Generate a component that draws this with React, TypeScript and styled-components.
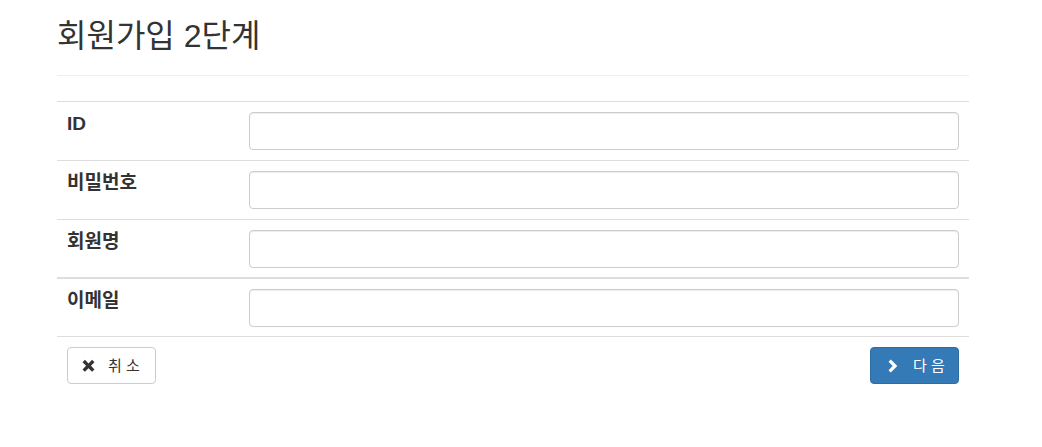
import React from "react";
import styled, { createGlobalStyle } from "styled-components";

const Global = createGlobalStyle`
  html, body { margin: 0; padding: 0; background: #fff; }
  body {
    font-family: "Liberation Sans", "Noto Sans CJK KR", Arial, sans-serif;
    font-size: 14px;
    line-height: 1.42857;
    color: #333;
  }
  * { box-sizing: border-box; }
`;

const Page = styled.div`
  width: 912px;
  margin-left: 57px;
  padding-top: 19px;
`;

const Header = styled.div`
  border-bottom: 1px solid #eee;
  padding-bottom: 21px;
  margin-bottom: 25px;
`;

const Title = styled.h2`
  margin: 0;
  font-size: 32px;
  font-weight: 400;
  line-height: 35px;
  color: #333;
`;

const Form = styled.div`
  display: flex;
  flex-direction: column;
`;

const Row = styled.div<{ $thick?: boolean; $tight?: boolean }>`
  display: grid;
  grid-template-columns: 182px 1fr;
  border-top: ${(p) => (p.$thick ? "2px" : "1px")} solid #ddd;
  padding: 10px 0 ${(p) => (p.$tight ? "9px" : "10px")};
`;

const Label = styled.label`
  padding: 0 10px;
  font-size: 19px;
  font-weight: 700;
  line-height: 23px;
  color: #333;
`;

const Field = styled.div`
  padding: 0 10px;
`;

const Input = styled.input`
  display: block;
  width: 100%;
  height: 38px;
  padding: 6px 12px;
  font-size: 14px;
  border: 1px solid #ccc;
  border-radius: 4px;
  background: #fff;
  box-shadow: inset 0 1px 1px rgba(0, 0, 0, 0.075);
  outline: none;
`;

const Footer = styled.div`
  display: flex;
  justify-content: space-between;
  border-top: 1px solid #ddd;
  padding: 10px 10px;
`;

const Button = styled.button<{ $primary?: boolean }>`
  display: inline-flex;
  align-items: center;
  justify-content: flex-start;
  gap: ${(p) => (p.$primary ? "14px" : "12px")};
  width: 89px;
  height: 37px;
  padding: 0 0 0 ${(p) => (p.$primary ? "17px" : "13px")};
  font-family: "Liberation Sans", "Noto Sans CJK KR", Arial, sans-serif;
  font-size: 15px;
  line-height: 20px;
  border-radius: 4px;
  cursor: pointer;
  color: ${(p) => (p.$primary ? "#fff" : "#333")};
  background: ${(p) => (p.$primary ? "#337ab7" : "#fff")};
  border: 1px solid ${(p) => (p.$primary ? "#2e6da4" : "#ccc")};
`;

const Icon = styled.svg<{ $w: number }>`
  width: ${(p) => p.$w}px;
  height: 14px;
  flex: none;
`;

const RemoveIcon = () => (
  <Icon $w={15} viewBox="0 0 15 14">
    <path d="M1.5 3.2 L3.9 0.8 L7.5 4.4 L11.1 0.8 L13.5 3.2 L9.9 6.8 L13.5 10.4 L11.1 12.8 L7.5 9.2 L3.9 12.8 L1.5 10.4 L5.1 6.8 Z" fill="#333" />
  </Icon>
);

const ChevronIcon = () => (
  <Icon $w={11} viewBox="0 0 11 14">
    <path d="M0.5 2.8 L2.8 0.5 L9.3 7 L2.8 13.5 L0.5 11.2 L4.7 7 Z" fill="#fff" />
  </Icon>
);

const fields = ["ID", "비밀번호", "회원명", "이메일"];

export default function App() {
  return (
    <>
      <Global />
      <Page>
        <Header>
          <Title>회원가입 2단계</Title>
        </Header>
        <Form>
          {fields.map((f, i) => (
            <Row key={f} $thick={i === 3} $tight={i >= 2}>
              <Label>{f}</Label>
              <Field>
                <Input type={i === 1 ? "password" : "text"} />
              </Field>
            </Row>
          ))}
          <Footer>
            <Button>
              <RemoveIcon />
              <span>취 소</span>
            </Button>
            <Button $primary>
              <ChevronIcon />
              <span>다 음</span>
            </Button>
          </Footer>
        </Form>
      </Page>
    </>
  );
}
